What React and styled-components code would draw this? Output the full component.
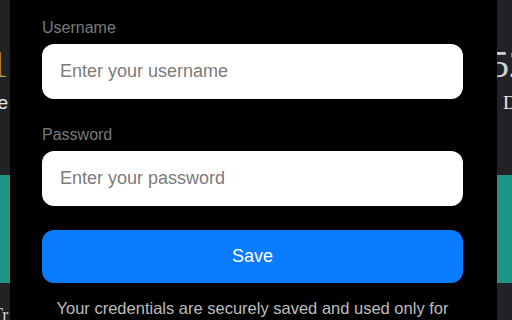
import React, { useState } from 'react'
import styled, { createGlobalStyle } from 'styled-components'

const GlobalStyle = createGlobalStyle`
  html, body {
    margin: 0;
    padding: 0;
    background: #212226;
  }
  * {
    box-sizing: border-box;
  }
`

export default function App() {
  const [username, setUsername] = useState('')
  const [password, setPassword] = useState('')

  return (
    <>
      <GlobalStyle />
      <Screen>
        <Backdrop>
          <StatsRow>
            <Stat align="right" edge="left">
              <StatValue gold>1</StatValue>
              <StatLabel>Active</StatLabel>
            </Stat>
            <Stat align="left" edge="right">
              <StatValue>52</StatValue>
              <StatLabel serif indent>Days</StatLabel>
            </Stat>
          </StatsRow>
          <Banner />
          <BottomRow>
            <BottomText>Tr</BottomText>
          </BottomRow>
        </Backdrop>

        <Modal>
          <Field>
            <Label>Username</Label>
            <Input
              placeholder="Enter your username"
              value={username}
              onChange={(e) => setUsername(e.target.value)}
            />
          </Field>
          <Field>
            <Label>Password</Label>
            <Input
              type="password"
              placeholder="Enter your password"
              value={password}
              onChange={(e) => setPassword(e.target.value)}
            />
          </Field>
          <SaveButton>Save</SaveButton>
          <Note>Your credentials are securely saved and used only for logging in.</Note>
        </Modal>
      </Screen>
    </>
  )
}

const Screen = styled.div`
position: relative;
width: 512px;
height: 320px;
overflow: hidden;
background: #212226;
font-family: "Liberation Sans", Arial, sans-serif;
`
const Backdrop = styled.div`
display: flex;
flex-direction: column;
height: 100%;
`
const StatsRow = styled.div`
display: flex;
justify-content: space-between;
padding-top: 44px;
`
const Stat = styled.div`
display: flex;
flex-direction: column;
width: 90px;
text-align: ${(p) => p.align};
margin-left: ${(p) => (p.edge === 'left' ? '-82px' : '0')};
margin-right: ${(p) => (p.edge === 'right' ? '-68px' : '0')};
`
const StatValue = styled.div`
font-family: "Liberation Serif", "Times New Roman", serif;
font-size: 38px;
line-height: 40px;
color: ${(p) => (p.gold ? '#b8a24a' : '#d0d0d0')};
`
const StatLabel = styled.div`
font-family: ${(p) => (p.serif ? '"Liberation Serif", serif' : '"Liberation Sans", sans-serif')};
font-size: 19px;
line-height: 22px;
margin-top: 8px;
padding-left: ${(p) => (p.indent ? '13px' : '0')};
color: #e8e8e8;
`
const Banner = styled.div`
margin-top: 61px;
height: 108px;
flex-shrink: 0;
background: #1e9585;
`
const BottomRow = styled.div`
padding-top: 22px;
`
const BottomText = styled.div`
font-family: "Liberation Serif", serif;
font-size: 18px;
color: #d8d8d8;
margin-left: -8px;
`
const Modal = styled.div`
position: absolute;
top: 0;
bottom: 0;
left: 10px;
width: 487px;
background: #000;
padding: 18px 34px 0 32px;
display: flex;
flex-direction: column;
`
const Field = styled.div`
display: flex;
flex-direction: column;
flex-shrink: 0;
margin-bottom: 26px;
&:nth-of-type(2) {
    margin-bottom: 24px;
}
`
const Label = styled.label`
font-size: 16px;
line-height: 19px;
color: #7a7a7a;
margin-bottom: 7px;
`
const Input = styled.input`
height: 55px;
width: 100%;
flex-shrink: 0;
border: none;
border-radius: 12px;
background: #fff;
padding: 0 18px;
font-family: "Liberation Sans", Arial, sans-serif;
font-size: 18px;
color: #222;
outline: none;
&::placeholder {
    color: #7b7b7b;
}
`
const SaveButton = styled.button`
height: 53px;
width: 100%;
flex-shrink: 0;
border: none;
border-radius: 12px;
background: #0a7bff;
color: #fff;
font-family: "Liberation Sans", Arial, sans-serif;
font-size: 18px;
`
const Note = styled.p`
margin: 16px 0 0;
flex-shrink: 0;
text-align: center;
font-size: 16.5px;
line-height: 19px;
color: #bdbdbd;
`
